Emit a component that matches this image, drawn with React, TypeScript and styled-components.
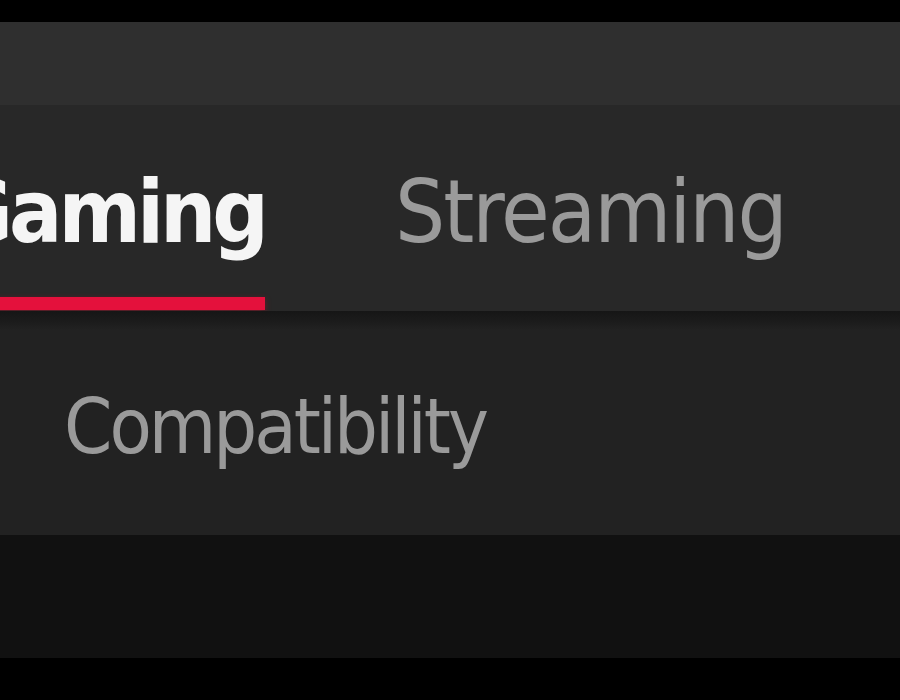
import * as React from 'react'
import styled, { createGlobalStyle } from 'styled-components'

const GlobalStyle = createGlobalStyle`
    html, body {
        margin: 0;
        padding: 0;
        background: #000;
        overflow: hidden;
    }
    body {
        font-family: "DejaVu Sans Condensed", "DejaVu Sans", sans-serif;
        font-stretch: condensed;
    }
`

const StyledDivPage = styled.div`
    width: 900px;
    height: 700px;
    display: flex;
    flex-direction: column;
    background-color: #000;
    overflow: hidden;
`
const StyledDivEdge = styled.div<{ $h: number }>`
    height: ${p => p.$h}px;
    flex: 0 0 auto;
    background-color: #000;
`
const StyledDivHeader = styled.div`
    height: 83px;
    flex: 0 0 auto;
    background-color: #2f2f2f;
`
// the tab strip is scrolled so the first tab starts off the left edge
const StyledDivTabBar = styled.div`
    height: 206px;
    flex: 0 0 auto;
    display: flex;
    flex-wrap: nowrap;
    align-items: flex-end;
    gap: 130px;
    padding-bottom: 1px;
    box-sizing: border-box;
    background-color: #282828;
    margin-left: -52px;
`
const StyledDivTab = styled.div`
    display: flex;
    flex-direction: column;
    flex: 0 0 auto;
`
const StyledSpanTabText = styled.span<{ $active?: boolean }>`
    font-size: 88px;
    line-height: 88px;
    font-weight: ${p => p.$active ? 700 : 400};
    letter-spacing: ${p => p.$active ? '-4px' : '-2px'};
    color: ${p => p.$active ? '#f5f5f5' : '#9a9a9a'};
    margin-bottom: 41px;
    white-space: nowrap;
`
const StyledDivUnderline = styled.div<{ $active?: boolean }>`
    height: 13px;
    background-color: ${p => p.$active ? '#e4113c' : 'transparent'};
    box-shadow: ${p => p.$active ? '0 2px 6px rgba(200, 10, 40, 0.45)' : 'none'};
`
const StyledDivShadow = styled.div`
    height: 19px;
    flex: 0 0 auto;
    background: linear-gradient(#161616, #1c1c1c 60%, #222222);
`
const StyledDivPanel = styled.div`
    height: 205px;
    flex: 0 0 auto;
    box-sizing: border-box;
    padding: 58px 0 0 64px;
    background-color: #222222;
`
const StyledSpanPanelTitle = styled.span`
    font-size: 77px;
    line-height: 77px;
    letter-spacing: -3px;
    color: #9a9a9a;
    white-space: nowrap;
`
const StyledDivFooter = styled.div`
    height: 123px;
    flex: 0 0 auto;
    background-color: #111111;
`

const tabs = [
    { name: 'Gaming', active: true },
    { name: 'Streaming', active: false },
]

export default function App() {
    return (
        <StyledDivPage>
            <GlobalStyle />
            <StyledDivEdge $h={22} />
            <StyledDivHeader />
            <StyledDivTabBar>
                {tabs.map(t => (
                    <StyledDivTab key={t.name}>
                        <StyledSpanTabText $active={t.active}>{t.name}</StyledSpanTabText>
                        <StyledDivUnderline $active={t.active} />
                    </StyledDivTab>
                ))}
            </StyledDivTabBar>
            <StyledDivShadow />
            <StyledDivPanel>
                <StyledSpanPanelTitle>Compatibility</StyledSpanPanelTitle>
            </StyledDivPanel>
            <StyledDivFooter />
            <StyledDivEdge $h={42} />
        </StyledDivPage>
    )
}
